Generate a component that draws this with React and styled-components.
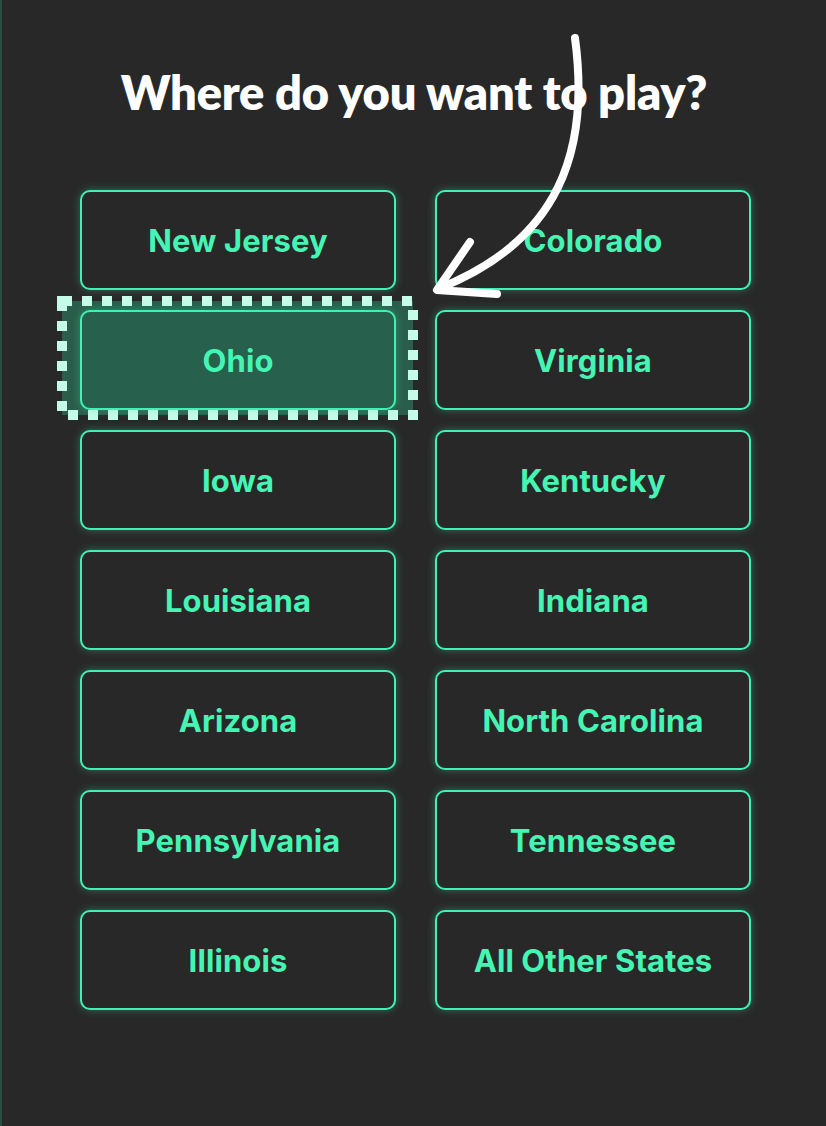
import styled, { createGlobalStyle } from "styled-components";

const GlobalStyle = createGlobalStyle`
  html, body {
    margin: 0;
    padding: 0;
    background: #282828;
  }
  * {
    box-sizing: border-box;
  }
`;

const states = [
  "New Jersey",
  "Colorado",
  "Ohio",
  "Virginia",
  "Iowa",
  "Kentucky",
  "Louisiana",
  "Indiana",
  "Arizona",
  "North Carolina",
  "Pennsylvania",
  "Tennessee",
  "Illinois",
  "All Other States",
];

const App = () => {
  return (
    <>
      <GlobalStyle />
      <Page>
        <Title>Where do you want to play?</Title>
        <Grid>
          {states.map((name) => (
            <Cell key={name}>
              {name === "Ohio" && (
                <Focus viewBox="0 0 361 124" preserveAspectRatio="none">
                  <rect x="5" y="5" width="351" height="114" fill="#2a5d4b" stroke="#c6fbe9" strokeWidth="10" strokeDasharray="10 10" />
                </Focus>
              )}
              <StateButton $active={name === "Ohio"}>{name}</StateButton>
            </Cell>
          ))}
        </Grid>
        <Arrow viewBox="0 0 826 320" width="826" height="320">
          <g fill="none" stroke="#fff" strokeWidth="8" strokeLinecap="round" strokeLinejoin="round">
            <path d="M575 38 C 590 150, 560 240, 440 288" />
            <path d="M470 242 L437 290 L497 294" />
          </g>
        </Arrow>
      </Page>
    </>
  );
};

const Page = styled.div`
  position: relative;
  width: 826px;
  min-height: 1126px;
  background: #282828;
  border-left: 2px solid #2d4a40;
  padding-top: 65px;
  font-family: Inter, "Noto Sans", sans-serif;
`;

const Title = styled.h1`
  margin: 0 0 70px;
  text-align: center;
  color: #fff;
  font-family: Lato, "Liberation Sans", sans-serif;
  font-weight: 800;
  font-size: 47px;
  line-height: 55px;
  letter-spacing: -0.2px;
`;

const Grid = styled.div`
  display: grid;
  grid-template-columns: 316px 316px;
  column-gap: 39px;
  row-gap: 20px;
  margin-left: 78px;
`;

const Cell = styled.div`
  position: relative;
  height: 100px;
`;

const Focus = styled.svg`
  position: absolute;
  left: -23px;
  top: -14px;
  width: 361px;
  height: 124px;
`;

const StateButton = styled.button`
  position: relative;
  width: 100%;
  height: 100%;
  display: flex;
  align-items: center;
  justify-content: center;
  border: 2.5px solid #3ff2b4;
  border-radius: 10px;
  background: ${(p) => (p.$active ? "#27604d" : "#282828")};
  box-shadow: 0 0 8px rgba(63, 242, 180, 0.35);
  color: #45f5b4;
  font-family: Inter, "Noto Sans", sans-serif;
  font-weight: 700;
  font-size: 31px;
  letter-spacing: 0.1px;
  cursor: pointer;
`;

const Arrow = styled.svg`
  position: absolute;
  left: -2px;
  top: 0;
  pointer-events: none;
`;

export default App;
